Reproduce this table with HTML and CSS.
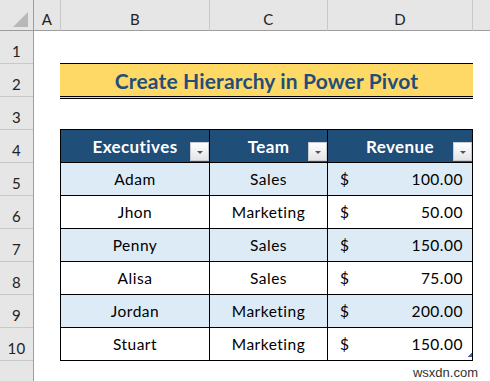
FILE: index.html
```html
<!DOCTYPE html>
<html>
<head>
<meta charset="utf-8">
<link rel="stylesheet" href="styles.css">
</head>
<body>
<div class="sheet">
  <div class="colhdr corner">
    <svg class="tri" width="16" height="16" viewBox="0 0 16 16"><polygon points="15,0 15,15 0,15" fill="#b8b8b8"/></svg>
  </div>
  <div class="colhdr">A</div>
  <div class="colhdr">B</div>
  <div class="colhdr">C</div>
  <div class="colhdr">D</div>
  <div class="colhdr last"></div>

  <div class="rows">
    <div class="rn">1</div>
    <div class="rn">2</div>
    <div class="rn">3</div>
    <div class="rn">4</div>
    <div class="rn">5</div>
    <div class="rn">6</div>
    <div class="rn">7</div>
    <div class="rn">8</div>
    <div class="rn">9</div>
    <div class="rn">10</div>
    <div class="rn filler"></div>
  </div>

  <div class="title">Create Hierarchy in Power Pivot</div>

  <div class="tbl">
    <div class="c h">Executives<span class="dd"></span></div>
    <div class="c h">Team<span class="dd"></span></div>
    <div class="c h">Revenue<span class="dd"></span></div>

    <div class="c alt">Adam</div>
    <div class="c alt">Sales</div>
    <div class="c alt money"><span>$</span><span>100.00</span></div>

    <div class="c">Jhon</div>
    <div class="c">Marketing</div>
    <div class="c money"><span>$</span><span>50.00</span></div>

    <div class="c alt">Penny</div>
    <div class="c alt">Sales</div>
    <div class="c alt money"><span>$</span><span>150.00</span></div>

    <div class="c">Alisa</div>
    <div class="c">Sales</div>
    <div class="c money"><span>$</span><span>75.00</span></div>

    <div class="c alt">Jordan</div>
    <div class="c alt">Marketing</div>
    <div class="c alt money"><span>$</span><span>200.00</span></div>

    <div class="c">Stuart</div>
    <div class="c">Marketing</div>
    <div class="c money"><span>$</span><span>150.00</span><span class="handle"></span></div>
  </div>

  <div class="wm">wsxdn.com</div>
</div>
</body>
</html>
```

FILE: styles.css
```css
html, body {
  margin: 0;
  padding: 0;
}

body {
  width: 490px;
  height: 381px;
  overflow: hidden;
  background: #ffffff;
  font-family: "Lato", "Open Sans", sans-serif;
  color: #000;
}

.sheet {
  display: grid;
  grid-template-columns: 34px 27px 149px 118px 145px 1fr;
  grid-template-rows: 31px repeat(10, 33px) 1fr;
  height: 381px;
}

.colhdr {
  box-sizing: border-box;
  background: #e6e6e6;
  border-bottom: 1px solid #9d9d9d;
  border-right: 1px solid #c9c9c9;
  display: flex;
  align-items: flex-end;
  justify-content: center;
  padding-bottom: 3px;
  font-size: 15px;
  line-height: 15px;
  letter-spacing: 0.3px;
  color: #222;
}

.corner {
  border-right: 1px solid #9d9d9d;
  justify-content: flex-end;
  padding: 0 4px 2px 0;
}

.tri {
  display: block;
}

.colhdr.last {
  border-right: none;
}

.rows {
  grid-column: 1;
  grid-row: 2 / -1;
  display: flex;
  flex-direction: column;
  background: #e6e6e6;
  border-right: 1px solid #9d9d9d;
  box-sizing: border-box;
}

.rn {
  box-sizing: border-box;
  height: 33px;
  flex: none;
  border-bottom: 1px solid #c9c9c9;
  display: flex;
  align-items: flex-end;
  justify-content: center;
  padding-bottom: 4px;
  font-size: 15px;
  line-height: 15px;
  letter-spacing: 0.3px;
  color: #222;
}

.rn.filler {
  flex: 1;
  border-bottom: none;
}

.title {
  grid-column: 3 / 6;
  grid-row: 3;
  align-self: start;
  margin: -1px 0 0 -1px;
  box-sizing: border-box;
  height: 36px;
  background: #ffd966;
  border-top: 1px solid #000;
  border-bottom: 3px double #000;
  display: flex;
  align-items: center;
  justify-content: center;
  padding-top: 1px;
  font-weight: 700;
  font-size: 21px;
  letter-spacing: 0.15px;
  color: #1f4e79;
}

.tbl {
  grid-column: 3 / 6;
  grid-row: 5 / 12;
  margin: -1px 0 0 -1px;
  display: grid;
  grid-template-columns: 149px 118px 145px;
  grid-auto-rows: 33px;
  border-left: 1px solid #000;
  border-top: 1px solid #000;
  align-self: start;
}

.c {
  box-sizing: border-box;
  border-right: 1px solid #000;
  border-bottom: 1px solid #000;
  display: flex;
  align-items: center;
  justify-content: center;
  font-size: 15.5px;
  letter-spacing: 0.5px;
  position: relative;
}

.c.alt {
  background: #ddebf7;
}

.c.h {
  background: #1f4e79;
  color: #fff;
  font-weight: 700;
  font-size: 17px;
  letter-spacing: 0.4px;
}

.dd {
  position: absolute;
  right: 0;
  bottom: 1px;
  width: 19px;
  height: 19px;
  box-sizing: border-box;
  border: 1px solid #c8ccd2;
  background: linear-gradient(#ffffff, #e2e4e8);
}

.dd::after {
  content: "";
  position: absolute;
  left: 6px;
  top: 8px;
  border-left: 3px solid transparent;
  border-right: 3px solid transparent;
  border-top: 3px solid #555;
}

.c.money {
  justify-content: space-between;
  padding: 0 9px 0 12px;
}

.handle {
  position: absolute;
  right: 0;
  bottom: 3px;
  width: 4px;
  height: 4px;
  background: linear-gradient(135deg, transparent 50%, #4a5fa8 50%);
}

.wm {
  grid-column: 5 / 7;
  grid-row: 12;
  justify-self: end;
  margin: 4px 12px 0 0;
  font-family: "Liberation Sans", Arial, sans-serif;
  font-size: 13px;
  color: #333;
}
```
